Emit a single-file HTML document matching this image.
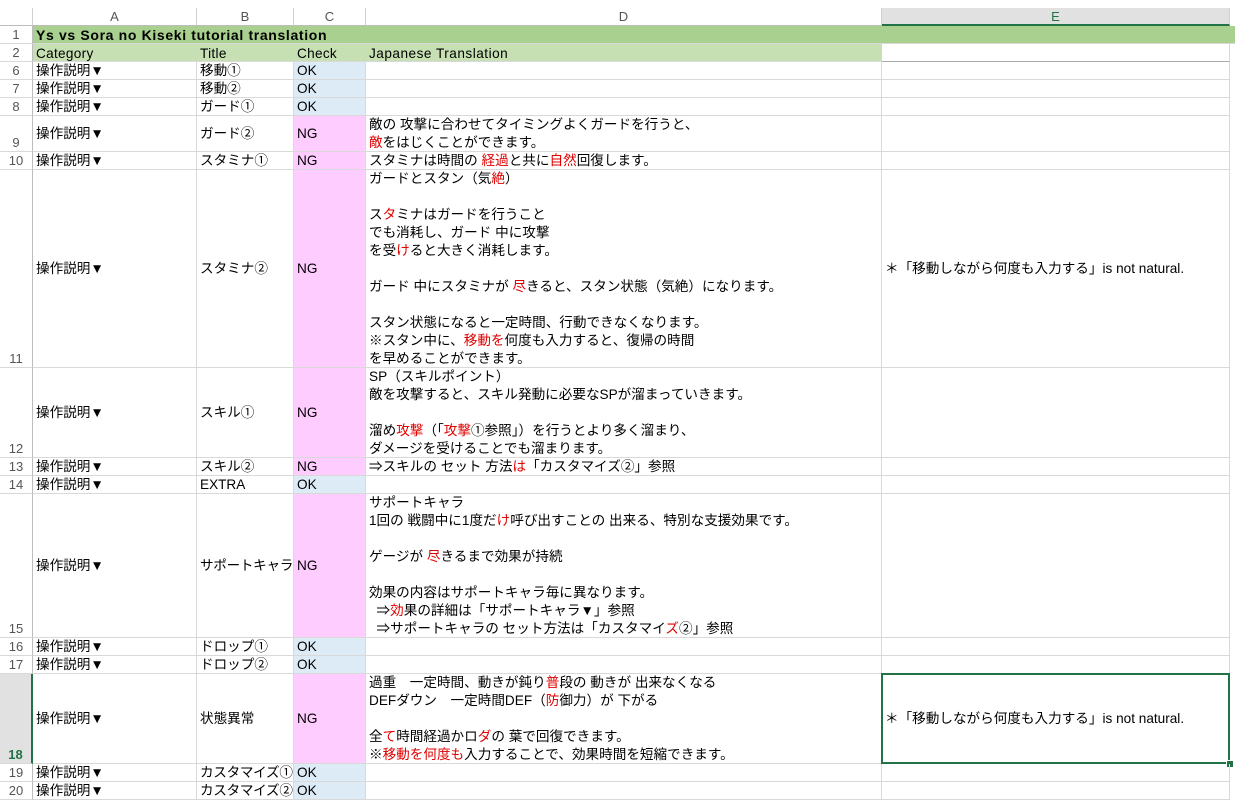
<!DOCTYPE html>
<html><head><meta charset="utf-8"><style>
body{margin:0;width:1235px;height:788px;overflow:hidden;background:#fff;position:relative;font-family:"Liberation Sans","Noto Sans CJK JP",sans-serif;font-size:13.6px;color:#000}
.c{position:absolute;box-sizing:border-box;border-right:1px solid #d9d9d9;border-bottom:1px solid #d9d9d9;white-space:pre;overflow:hidden;line-height:18px;padding-left:3px}
.v{display:flex;align-items:center}
.rn{position:absolute;left:0;width:33px;box-sizing:border-box;border-right:1px solid #bdbdbd;border-bottom:1px solid #d9d9d9;color:#555;font-size:13px;text-align:center;display:flex;align-items:flex-end;justify-content:center;line-height:17px;background:#fff}
.ch{position:absolute;top:8px;height:18px;box-sizing:border-box;border-right:1px solid #d0d0d0;border-bottom:1px solid #bdbdbd;text-align:center;color:#555;font-size:13px;line-height:18px}
.r{color:#e00000}
.ok{background:#ddebf7}
.ng{background:#ffccff}
.b{letter-spacing:-0.3px}
</style></head><body>
<div class="ch" style="left:0;width:33px"></div>
<div class="ch" style="left:33px;width:164px">A</div>
<div class="ch" style="left:197px;width:97px">B</div>
<div class="ch" style="left:294px;width:72px">C</div>
<div class="ch" style="left:366px;width:516px">D</div>
<div class="ch" style="left:882px;width:348px;background:#e1e1e1;border-bottom:2px solid #217346;color:#217346">E</div>

<div class="rn" style="top:26px;height:18px">1</div>
<div class="c" style="top:26px;left:33px;width:1202px;height:18px;background:#a9d08e;border-right:0;font-weight:bold;font-size:14px;letter-spacing:0.65px">Ys vs Sora no Kiseki tutorial translation</div>
<div class="rn" style="top:44px;height:18px">2</div>
<div class="c" style="top:44px;left:33px;width:164px;height:18px;background:#c6e0b4;border-right:0;padding-top:1px;letter-spacing:0.3px">Category</div>
<div class="c" style="top:44px;left:197px;width:97px;height:18px;background:#c6e0b4;border-right:0;padding-top:1px;letter-spacing:0.3px">Title</div>
<div class="c" style="top:44px;left:294px;width:72px;height:18px;background:#c6e0b4;border-right:0;padding-top:1px;letter-spacing:0.3px">Check</div>
<div class="c" style="top:44px;left:366px;width:516px;height:18px;background:#c6e0b4;border-right:0;padding-top:1px;letter-spacing:0.5px">Japanese Translation</div>
<div class="c" style="top:44px;left:882px;width:348px;height:18px;border-bottom:1px solid #aaa"></div>

<div class="rn" style="top:62px;height:18px">6</div>
<div class="c v" style="top:62px;left:33px;width:164px;height:18px">操作説明▼</div>
<div class="c v" style="top:62px;left:197px;width:97px;height:18px">移動①</div>
<div class="c v ok" style="top:62px;left:294px;width:72px;height:18px">OK</div>
<div class="c" style="top:62px;left:366px;width:516px;height:18px"></div>
<div class="c" style="top:62px;left:882px;width:348px;height:18px"></div>

<div class="rn" style="top:80px;height:18px">7</div>
<div class="c v" style="top:80px;left:33px;width:164px;height:18px">操作説明▼</div>
<div class="c v" style="top:80px;left:197px;width:97px;height:18px">移動②</div>
<div class="c v ok" style="top:80px;left:294px;width:72px;height:18px">OK</div>
<div class="c" style="top:80px;left:366px;width:516px;height:18px"></div>
<div class="c" style="top:80px;left:882px;width:348px;height:18px"></div>

<div class="rn" style="top:98px;height:18px">8</div>
<div class="c v" style="top:98px;left:33px;width:164px;height:18px">操作説明▼</div>
<div class="c v" style="top:98px;left:197px;width:97px;height:18px">ガード①</div>
<div class="c v ok" style="top:98px;left:294px;width:72px;height:18px">OK</div>
<div class="c" style="top:98px;left:366px;width:516px;height:18px"></div>
<div class="c" style="top:98px;left:882px;width:348px;height:18px"></div>

<div class="rn" style="top:116px;height:36px">9</div>
<div class="c v" style="top:116px;left:33px;width:164px;height:36px">操作説明▼</div>
<div class="c v" style="top:116px;left:197px;width:97px;height:36px">ガード②</div>
<div class="c v ng" style="top:116px;left:294px;width:72px;height:36px">NG</div>
<div class="c" style="top:116px;left:366px;width:516px;height:36px">敵の 攻撃に合わせてタイミングよくガードを行うと、
<span class="r">敵</span>をはじくことができます。</div>
<div class="c" style="top:116px;left:882px;width:348px;height:36px"></div>

<div class="rn" style="top:152px;height:18px">10</div>
<div class="c v" style="top:152px;left:33px;width:164px;height:18px">操作説明▼</div>
<div class="c v" style="top:152px;left:197px;width:97px;height:18px">スタミナ①</div>
<div class="c v ng" style="top:152px;left:294px;width:72px;height:18px">NG</div>
<div class="c" style="top:152px;left:366px;width:516px;height:18px">スタミナは時間の <span class="r">経過</span>と共に<span class="r">自然</span>回復します。</div>
<div class="c" style="top:152px;left:882px;width:348px;height:18px"></div>

<div class="rn" style="top:170px;height:198px">11</div>
<div class="c v" style="top:170px;left:33px;width:164px;height:198px">操作説明▼</div>
<div class="c v" style="top:170px;left:197px;width:97px;height:198px">スタミナ②</div>
<div class="c v ng" style="top:170px;left:294px;width:72px;height:198px">NG</div>
<div class="c" style="top:170px;left:366px;width:516px;height:198px">ガードとスタン（気<span class="r">絶</span>）

ス<span class="r">タ</span>ミナはガードを行うこと
でも消耗し、ガード 中に攻撃
を受<span class="r">け</span>ると大きく消耗します。

ガード 中にスタミナが <span class="r">尽</span>きると、スタン状態（気絶）になります。

スタン状態になると一定時間、行動できなくなります。
※スタン中に、<span class="r">移動を</span>何度も入力すると、復帰の時間
を早めることができます。</div>
<div class="c v" style="top:170px;left:882px;width:348px;height:198px">＊「移動しながら何度も入力する」is not natural.</div>

<div class="rn" style="top:368px;height:90px">12</div>
<div class="c v" style="top:368px;left:33px;width:164px;height:90px">操作説明▼</div>
<div class="c v" style="top:368px;left:197px;width:97px;height:90px">スキル①</div>
<div class="c v ng" style="top:368px;left:294px;width:72px;height:90px">NG</div>
<div class="c" style="top:368px;left:366px;width:516px;height:90px">SP（スキルポイント）
敵を攻撃すると、スキル発動に必要なSPが溜まっていきます。

溜め<span class="r">攻撃</span>（「<span class="r">攻撃</span>①参照」）を行うとより多く溜まり、
ダメージを受けることでも溜まります。</div>
<div class="c" style="top:368px;left:882px;width:348px;height:90px"></div>

<div class="rn" style="top:458px;height:18px">13</div>
<div class="c v" style="top:458px;left:33px;width:164px;height:18px">操作説明▼</div>
<div class="c v" style="top:458px;left:197px;width:97px;height:18px">スキル②</div>
<div class="c v ng" style="top:458px;left:294px;width:72px;height:18px">NG</div>
<div class="c" style="top:458px;left:366px;width:516px;height:18px">⇒スキルの セット 方法<span class="r">は</span>「カスタマイズ②」参照</div>
<div class="c" style="top:458px;left:882px;width:348px;height:18px"></div>

<div class="rn" style="top:476px;height:18px">14</div>
<div class="c v" style="top:476px;left:33px;width:164px;height:18px">操作説明▼</div>
<div class="c v" style="top:476px;left:197px;width:97px;height:18px">EXTRA</div>
<div class="c v ok" style="top:476px;left:294px;width:72px;height:18px">OK</div>
<div class="c" style="top:476px;left:366px;width:516px;height:18px"></div>
<div class="c" style="top:476px;left:882px;width:348px;height:18px"></div>

<div class="rn" style="top:494px;height:144px">15</div>
<div class="c v" style="top:494px;left:33px;width:164px;height:144px">操作説明▼</div>
<div class="c v b" style="top:494px;left:197px;width:97px;height:144px">サポートキャラ</div>
<div class="c v ng" style="top:494px;left:294px;width:72px;height:144px">NG</div>
<div class="c" style="top:494px;left:366px;width:516px;height:144px">サポートキャラ
1回の 戦闘中に1度だ<span class="r">け</span>呼び出すことの 出来る、特別な支援効果です。

ゲージが <span class="r">尽</span>きるまで効果が持続

効果の内容はサポートキャラ毎に異なります。
  ⇒<span class="r">効</span>果の詳細は「サポートキャラ▼」参照
  ⇒サポートキャラの セット方法は「カスタマイ<span class="r">ズ</span>②」参照</div>
<div class="c" style="top:494px;left:882px;width:348px;height:144px"></div>

<div class="rn" style="top:638px;height:18px">16</div>
<div class="c v" style="top:638px;left:33px;width:164px;height:18px">操作説明▼</div>
<div class="c v" style="top:638px;left:197px;width:97px;height:18px">ドロップ①</div>
<div class="c v ok" style="top:638px;left:294px;width:72px;height:18px">OK</div>
<div class="c" style="top:638px;left:366px;width:516px;height:18px"></div>
<div class="c" style="top:638px;left:882px;width:348px;height:18px"></div>

<div class="rn" style="top:656px;height:18px">17</div>
<div class="c v" style="top:656px;left:33px;width:164px;height:18px">操作説明▼</div>
<div class="c v" style="top:656px;left:197px;width:97px;height:18px">ドロップ②</div>
<div class="c v ok" style="top:656px;left:294px;width:72px;height:18px">OK</div>
<div class="c" style="top:656px;left:366px;width:516px;height:18px"></div>
<div class="c" style="top:656px;left:882px;width:348px;height:18px"></div>

<div class="rn" style="top:674px;height:90px;background:#e1e1e1;color:#217346;font-weight:bold;border-right:2px solid #217346">18</div>
<div class="c v" style="top:674px;left:33px;width:164px;height:90px">操作説明▼</div>
<div class="c v" style="top:674px;left:197px;width:97px;height:90px">状態異常</div>
<div class="c v ng" style="top:674px;left:294px;width:72px;height:90px">NG</div>
<div class="c" style="top:674px;left:366px;width:516px;height:90px">過重　一定時間、動きが鈍り<span class="r">普</span>段の 動きが 出来なくなる
DEFダウン　一定時間DEF（<span class="r">防</span>御力）が 下がる

全<span class="r">て</span>時間経過かロ<span class="r">ダ</span>の 葉で回復できます。
※<span class="r">移動を何度も</span>入力することで、効果時間を短縮できます。</div>
<div class="c v" style="top:674px;left:882px;width:348px;height:90px">＊「移動しながら何度も入力する」is not natural.</div>
<div style="position:absolute;left:881px;top:673px;width:349px;height:91px;border:2px solid #217346;box-sizing:border-box"></div>
<div style="position:absolute;left:1226px;top:760px;width:6px;height:6px;background:#217346;border:1px solid #fff"></div>

<div class="rn" style="top:764px;height:18px">19</div>
<div class="c v" style="top:764px;left:33px;width:164px;height:18px">操作説明▼</div>
<div class="c v b" style="top:764px;left:197px;width:97px;height:18px">カスタマイズ①</div>
<div class="c v ok" style="top:764px;left:294px;width:72px;height:18px">OK</div>
<div class="c" style="top:764px;left:366px;width:516px;height:18px"></div>
<div class="c" style="top:764px;left:882px;width:348px;height:18px"></div>

<div class="rn" style="top:782px;height:18px">20</div>
<div class="c v" style="top:782px;left:33px;width:164px;height:18px">操作説明▼</div>
<div class="c v b" style="top:782px;left:197px;width:97px;height:18px">カスタマイズ②</div>
<div class="c v ok" style="top:782px;left:294px;width:72px;height:18px">OK</div>
<div class="c" style="top:782px;left:366px;width:516px;height:18px"></div>
<div class="c" style="top:782px;left:882px;width:348px;height:18px"></div>
</body></html>
